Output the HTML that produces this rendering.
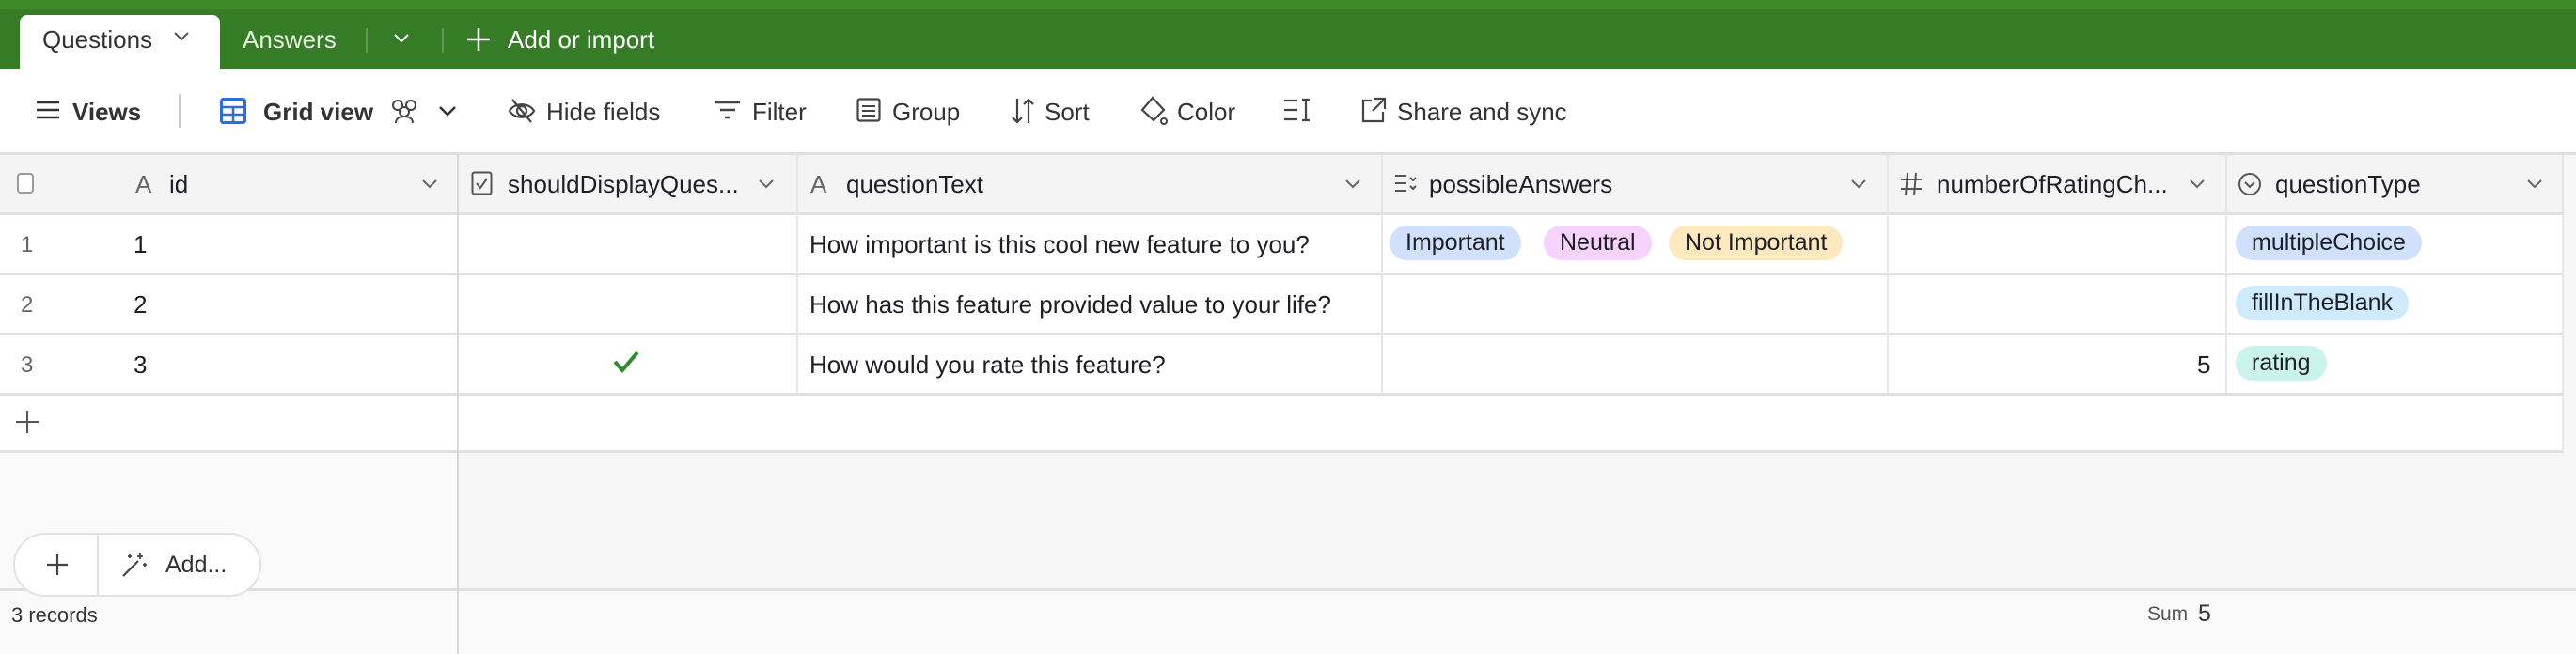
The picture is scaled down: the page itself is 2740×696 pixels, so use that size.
<!DOCTYPE html>
<html><head><meta charset="utf-8"><style>
*{box-sizing:border-box;margin:0;padding:0}
body{width:2740px;height:696px;overflow:hidden;background:#fff;font-family:"Liberation Sans",sans-serif;color:#1d1f25;position:relative}
.a{position:absolute;white-space:nowrap}
.t{font-size:26px}
.hd{font-size:26px;color:#1d1f25}
.pill{position:absolute;height:37px;border-radius:19px;font-size:25px;line-height:37px;padding:0 17px;color:#1d1f25}
.vl{position:absolute;width:2px;background:#e4e6e7}
.hl{position:absolute;height:3px;background:#dde1e1}
svg{position:absolute}
</style></head><body>
<!-- top bar -->
<div class="a" style="left:0;top:0;width:2740px;height:73px;background:#367c27"></div>
<div class="a" style="left:0;top:0;width:2740px;height:10px;background:#3d8a2b"></div>
<div class="a" style="left:21px;top:16px;width:213px;height:57px;background:#fff;border-radius:8px 8px 0 0"></div>
<div class="a t" style="left:45px;top:27px;color:#333">Questions</div>
<svg style="left:184px;top:33px" width="18" height="12"><path d="M2 2 L9 9 L16 2" stroke="#555" stroke-width="2" fill="none"/></svg>
<div class="a t" style="left:258px;top:27px;color:#e6f0e3">Answers</div>
<div class="a" style="left:389px;top:30px;width:2px;height:26px;background:#5e9a52"></div>
<svg style="left:418px;top:35px" width="18" height="12"><path d="M2 2 L9 9 L16 2" stroke="#fff" stroke-width="2" fill="none"/></svg>
<div class="a" style="left:470px;top:30px;width:2px;height:26px;background:#5e9a52"></div>
<svg style="left:496px;top:29px" width="26" height="26"><path d="M13 1V25M1 13H25" stroke="#fff" stroke-width="2.5"/></svg>
<div class="a t" style="left:540px;top:27px;color:#fff">Add or import</div>
<!-- toolbar -->
<div class="a" style="left:0;top:73px;width:2740px;height:90px;background:#fff"></div>
<svg style="left:38px;top:106px" width="26" height="22"><path d="M1 3H25M1 11H25M1 19H25" stroke="#333" stroke-width="2.5"/></svg>
<div class="a t" style="left:77px;top:104px;font-weight:bold;color:#333">Views</div>
<div class="a" style="left:190px;top:100px;width:2px;height:36px;background:#ccc"></div>
<svg style="left:234px;top:104px" width="28" height="28"><rect x="1.5" y="1.5" width="25" height="25" rx="2" stroke="#2d6ed9" stroke-width="3" fill="none"/><path d="M1 10H27M1 18H27M14 10V27" stroke="#2d6ed9" stroke-width="2.5"/></svg>
<div class="a t" style="left:280px;top:104px;font-weight:bold;color:#333">Grid view</div>
<svg style="left:413px;top:104px" width="34" height="28"><circle cx="10" cy="8" r="5" stroke="#444" stroke-width="2" fill="none"/><circle cx="24" cy="8" r="5" stroke="#444" stroke-width="2" fill="none"/><circle cx="17" cy="15" r="5" stroke="#444" stroke-width="2" fill="none"/><path d="M8 27c0-5 4-7 9-7s9 2 9 7" stroke="#444" stroke-width="2" fill="none"/></svg>
<svg style="left:466px;top:112px" width="20" height="12"><path d="M2 2 L10 10 L18 2" stroke="#333" stroke-width="2.5" fill="none"/></svg>
<svg style="left:540px;top:104px" width="30" height="28"><path d="M2 14C7 5 23 5 28 14C23 23 7 23 2 14Z" stroke="#444" stroke-width="2.2" fill="none"/><circle cx="15" cy="14" r="5" stroke="#444" stroke-width="2.2" fill="none"/><path d="M5 2L25 26" stroke="#444" stroke-width="2.2"/></svg>
<div class="a t" style="left:581px;top:104px;color:#333">Hide fields</div>
<svg style="left:760px;top:106px" width="28" height="22"><path d="M1 3H27M6 11H22M11 19H17" stroke="#444" stroke-width="2.5"/></svg>
<div class="a t" style="left:800px;top:104px;color:#333">Filter</div>
<svg style="left:911px;top:104px" width="26" height="26"><rect x="1.5" y="1.5" width="23" height="23" rx="2" stroke="#444" stroke-width="2.2" fill="none"/><path d="M6 9H20M6 14H20M6 19H20" stroke="#444" stroke-width="2"/></svg>
<div class="a t" style="left:949px;top:104px;color:#333">Group</div>
<svg style="left:1075px;top:103px" width="26" height="30"><path d="M7 2V27M2 22L7 27L12 22M19 28V3M14 8L19 3L24 8" stroke="#444" stroke-width="2.2" fill="none"/></svg>
<div class="a t" style="left:1111px;top:104px;color:#333">Sort</div>
<svg style="left:1212px;top:102px" width="30" height="32"><path d="M14 2L26 15L15 26L3 15Z" stroke="#444" stroke-width="2.2" fill="none"/><circle cx="26" cy="27" r="3" stroke="#444" stroke-width="2" fill="none"/></svg>
<div class="a t" style="left:1252px;top:104px;color:#333">Color</div>
<svg style="left:1365px;top:104px" width="32" height="26"><path d="M1 3H15M1 13H15M1 23H15M24 2V24M20 2H28M20 24H28" stroke="#444" stroke-width="2.2"/></svg>
<svg style="left:1447px;top:103px" width="28" height="28"><path d="M12 4H3V26H24V16" stroke="#444" stroke-width="2.2" fill="none"/><path d="M15 2H26V13M26 2L13 15" stroke="#444" stroke-width="2.2" fill="none"/></svg>
<div class="a t" style="left:1486px;top:104px;color:#333">Share and sync</div>
<!-- grid area bg -->
<div class="a" style="left:0;top:163px;width:487px;height:533px;background:#fafafa"></div>
<div class="a" style="left:487px;top:163px;width:2253px;height:533px;background:#f6f6f6"></div>
<div class="a" style="left:487px;top:627px;width:2253px;height:69px;background:#fafafa"></div>
<!-- header -->
<div class="a" style="left:0;top:164px;width:2726px;height:63px;background:#f4f4f4"></div>
<div class="hl" style="left:0;top:162px;width:2740px"></div>
<div class="hl" style="left:0;top:226px;width:2726px"></div>
<!-- rows -->
<div class="a" style="left:0;top:229px;width:2726px;height:252px;background:#fff"></div>
<div class="hl" style="left:0;top:290px;width:2726px"></div>
<div class="hl" style="left:0;top:354px;width:2726px"></div>
<div class="hl" style="left:0;top:418px;width:2726px"></div>
<div class="hl" style="left:0;top:479px;width:2726px"></div>
<div class="hl" style="left:0;top:626px;width:2740px"></div>
<div class="vl" style="left:486px;top:164px;height:532px;background:#d6d8d9"></div>
<div class="vl" style="left:847px;top:164px;height:255px"></div>
<div class="vl" style="left:1469px;top:164px;height:255px"></div>
<div class="vl" style="left:2007px;top:164px;height:255px"></div>
<div class="vl" style="left:2367px;top:164px;height:255px"></div>
<div class="vl" style="left:2725px;top:164px;height:317px"></div>
<!-- header contents -->
<div class="a" style="left:18px;top:184px;width:18px;height:22px;border:2px solid #999;border-radius:4px;background:#fff"></div>
<div class="a hd" style="left:144px;top:181px;color:#666">A</div>
<div class="a hd" style="left:180px;top:181px">id</div>
<svg style="left:448px;top:190px" width="18" height="12"><path d="M2 2L9 9L16 2" stroke="#666" stroke-width="2" fill="none"/></svg>
<svg style="left:501px;top:182px" width="24" height="26"><rect x="1.5" y="1.5" width="20" height="23" rx="2" stroke="#555" stroke-width="2" fill="none"/><path d="M6 13L10 18L17 8" stroke="#555" stroke-width="2" fill="none"/></svg>
<div class="a hd" style="left:540px;top:181px">shouldDisplayQues...</div>
<svg style="left:806px;top:190px" width="18" height="12"><path d="M2 2L9 9L16 2" stroke="#666" stroke-width="2" fill="none"/></svg>
<div class="a hd" style="left:862px;top:181px;color:#666">A</div>
<div class="a hd" style="left:900px;top:181px">questionText</div>
<svg style="left:1430px;top:190px" width="18" height="12"><path d="M2 2L9 9L16 2" stroke="#666" stroke-width="2" fill="none"/></svg>
<svg style="left:1483px;top:184px" width="26" height="22"><path d="M1 3H13M1 11H13M1 19H13M17 5L20 8L23 5M17 14L20 17L23 14" stroke="#555" stroke-width="2" fill="none"/></svg>
<div class="a hd" style="left:1520px;top:181px">possibleAnswers</div>
<svg style="left:1968px;top:190px" width="18" height="12"><path d="M2 2L9 9L16 2" stroke="#666" stroke-width="2" fill="none"/></svg>
<svg style="left:2021px;top:183px" width="24" height="26"><path d="M8 1L6 25M17 1L15 25M1 8H23M1 18H23" stroke="#555" stroke-width="2"/></svg>
<div class="a hd" style="left:2060px;top:181px">numberOfRatingCh...</div>
<svg style="left:2328px;top:190px" width="18" height="12"><path d="M2 2L9 9L16 2" stroke="#666" stroke-width="2" fill="none"/></svg>
<svg style="left:2380px;top:183px" width="26" height="26"><circle cx="13" cy="13" r="11" stroke="#555" stroke-width="2" fill="none"/><path d="M8 11L13 16L18 11" stroke="#555" stroke-width="2" fill="none"/></svg>
<div class="a hd" style="left:2420px;top:181px">questionType</div>
<svg style="left:2687px;top:190px" width="18" height="12"><path d="M2 2L9 9L16 2" stroke="#666" stroke-width="2" fill="none"/></svg>
<!-- row data -->
<div class="a" style="left:22px;top:247px;font-size:24px;color:#666">1</div>
<div class="a" style="left:22px;top:311px;font-size:24px;color:#666">2</div>
<div class="a" style="left:22px;top:375px;font-size:24px;color:#666">3</div>
<div class="a t" style="left:142px;top:245px">1</div>
<div class="a t" style="left:142px;top:309px">2</div>
<div class="a t" style="left:142px;top:373px">3</div>
<svg style="left:651px;top:372px" width="30" height="26"><path d="M3 13L11 22L27 3" stroke="#2e8a2a" stroke-width="4" fill="none"/></svg>
<div class="a t" style="left:861px;top:245px">How important is this cool new feature to you?</div>
<div class="a t" style="left:861px;top:309px">How has this feature provided value to your life?</div>
<div class="a t" style="left:861px;top:373px">How would you rate this feature?</div>
<div class="pill" style="left:1478px;top:240px;background:#d1e0fc">Important</div>
<div class="pill" style="left:1642px;top:240px;background:#f5d3fc">Neutral</div>
<div class="pill" style="left:1775px;top:240px;background:#fde9bd">Not Important</div>
<div class="a t" style="left:2337px;top:373px">5</div>
<div class="pill" style="left:2378px;top:240px;background:#d1e0fc">multipleChoice</div>
<div class="pill" style="left:2378px;top:304px;background:#cfe9fd">fillInTheBlank</div>
<div class="pill" style="left:2378px;top:368px;background:#c9f3ec">rating</div>
<svg style="left:16px;top:436px" width="26" height="26"><path d="M13 1V25M1 13H25" stroke="#555" stroke-width="2"/></svg>
<!-- add pill -->
<div class="a" style="left:14px;top:567px;width:264px;height:68px;border:2px solid #e2e2e2;border-radius:34px;background:#fff"></div>
<div class="a" style="left:103px;top:569px;width:2px;height:64px;background:#e2e2e2"></div>
<svg style="left:49px;top:589px" width="24" height="24"><path d="M12 1V23M1 12H23" stroke="#444" stroke-width="2.2"/></svg>
<svg style="left:128px;top:587px" width="30" height="28"><path d="M3 26L19 10" stroke="#444" stroke-width="2.2"/><path d="M21 2V8M18 5H24M26 12V16M24 14H28M10 3V7M8 5H12" stroke="#444" stroke-width="1.8"/></svg>
<div class="a" style="left:176px;top:587px;font-size:25px;color:#333">Add...</div>
<!-- footer -->
<div class="a" style="left:12px;top:642px;font-size:22px;color:#333">3 records</div>
<div class="a" style="left:2284px;top:642px;font-size:21px;color:#555">Sum</div>
<div class="a" style="left:2338px;top:639px;font-size:25px;color:#333">5</div>
</body></html>
